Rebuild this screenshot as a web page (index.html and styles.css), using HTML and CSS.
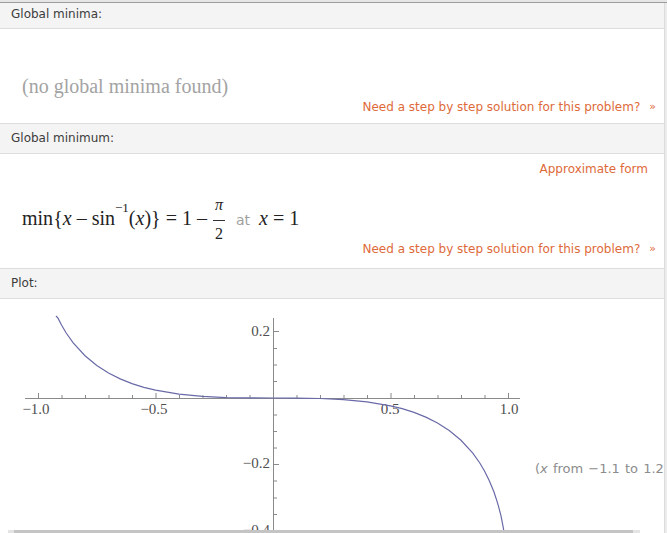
FILE: index.html
```html
<!DOCTYPE html>
<html>
<head>
<meta charset="utf-8">
<link rel="stylesheet" href="styles.css">
</head>
<body>
<div class="topbar"></div>
<div class="pods">
  <section class="pod">
    <div class="pod-head pod-head--first">Global minima:</div>
    <div class="pod-body pod-body--minima">
      <div class="noresult">(no global minima found)</div>
      <div class="step-row"><a class="step-link">Need a step by step solution for this problem?</a><span class="chev">»</span></div>
    </div>
  </section>
  <section class="pod">
    <div class="pod-head">Global minimum:</div>
    <div class="pod-body pod-body--minimum">
      <div class="approx-row"><a class="approx-link">Approximate form</a></div>
      <div class="formula"><span class="f-line">min<span class="brace">{</span><i>x</i><span class="op">–</span>sin<span class="sup">−1</span>(<i>x</i>)<span class="brace">}</span><span class="op op--wide">=</span>1<span class="op op--wide">–</span><span class="frac"><span class="num"><i>π</i></span><span class="den">2</span></span><span class="at">at</span><i>x</i><span class="op op--wide">=</span>1</span></div>
      <div class="step-row"><a class="step-link">Need a step by step solution for this problem?</a><span class="chev">»</span></div>
    </div>
  </section>
  <section class="pod">
    <div class="pod-head">Plot:</div>
    <div class="pod-body pod-body--plot">
      <svg class="plot" width="530" height="240" viewBox="0 0 530 240">
        <g class="axis" stroke="#8a8a8a" stroke-width="1" fill="none">
          <line x1="25" y1="99.5" x2="520" y2="99.5"/>
          <line x1="273.5" y1="19" x2="273.5" y2="240"/>
          <path d="M38.5 99v-5 M62 99v-3 M85.5 99v-3 M109 99v-3 M132.5 99v-3 M156 99v-5 M179.5 99v-3 M203 99v-3 M226.5 99v-3 M250 99v-3 M297 99v-3 M320.5 99v-3 M344 99v-3 M367.5 99v-3 M391 99v-5 M414.5 99v-3 M438 99v-3 M461.5 99v-3 M485 99v-3 M508.5 99v-5"/>
          <path d="M274 32.5h5 M274 49.5h3 M274 66h3 M274 82.5h3 M274 116h3 M274 132.5h3 M274 149h3 M274 165.5h5 M274 182h3 M274 199h3 M274 215.5h3 M274 232h5"/>
        </g>
        <g class="ticklabels">
          <text x="36" y="115" text-anchor="middle">−1.0</text>
          <text x="154" y="115" text-anchor="middle">−0.5</text>
          <text x="390" y="115" text-anchor="middle">0.5</text>
          <text x="509" y="115" text-anchor="middle">1.0</text>
          <text x="270" y="37" text-anchor="end">0.2</text>
          <text x="270" y="169" text-anchor="end">−0.2</text>
          <text x="270" y="236" text-anchor="end">−0.4</text>
        </g>
        <polyline class="curve" fill="none" stroke="#6a6aa8" stroke-width="1.2" points="56,17 58,19.2 61.5,26 66.2,34 73.2,43.9 85,56.7 96.8,66.4 108.5,74 120.2,79.9 132,84.6 143.8,88.3 155.5,91.2 179,95.2 202.5,97.4 226,98.6 249.5,98.9 273,99 296.5,99.1 320,99.5 343.5,100.6 367,102.8 390.5,106.8 402.2,109.7 414,113.4 425.8,118.1 437.5,124 449.2,131.6 461,141.3 472.8,154.1 479.8,164 484.5,172 489.2,181.4 493.9,192.8 496.2,199.7 498.6,207.6 501,216.9 503.3,228.6 505.6,244.8"/>
      </svg>
      <div class="plot-caption">(<i>x</i> from −1.1 to 1.2</div>
    </div>
  </section>
</div>
<div class="hscroll"></div>
</body>
</html>
```

FILE: styles.css
```css
html, body {
  margin: 0;
  padding: 0;
  overflow: hidden;
}
body {
  background: #ececec;
  font-family: "DejaVu Sans", Verdana, sans-serif;
  font-size: 12px;
  color: #444;
}
.topbar {
  height: 2px;
  background: #e6e6e6;
  border-bottom: 1px solid #9d9d9d;
}
.pods {
  width: 664px;
  border-right: 1px solid #dcdcdc;
}
.pod-head {
  height: 29px;
  line-height: 29px;
  padding-left: 11px;
  background: #f4f4f4;
  border-bottom: 1px solid #dddddd;
  color: #3c3c3c;
}
.pod-head--first {
  height: 25px;
  line-height: 22px;
}
.pod-body {
  background: #ffffff;
  border-bottom: 1px solid #dddddd;
  box-sizing: border-box;
}
.pod-body--minima {
  height: 95px;
  padding-top: 44px;
}
.noresult {
  padding-left: 22px;
  font-family: "Liberation Serif", "Times New Roman", serif;
  font-size: 20px;
  line-height: 26px;
  color: #a3a3a3;
}
.step-row {
  display: flex;
  justify-content: flex-end;
  align-items: center;
  height: 16px;
  padding-right: 8px;
}
.step-link, .approx-link {
  color: #de6a3a;
  line-height: 16px;
}
.chev {
  color: #de6a3a;
  font-size: 11px;
  margin-left: 9px;
  line-height: 16px;
}
.pod-body--minimum {
  height: 115px;
  padding-top: 7px;
}
.approx-row {
  display: flex;
  justify-content: flex-end;
  padding-right: 16px;
  height: 16px;
  margin-bottom: 17px;
}
.formula {
  height: 47px;
  padding-left: 22px;
  font-family: "Liberation Serif", "Times New Roman", serif;
  font-size: 20px;
  line-height: 26px;
  color: #222;
  white-space: nowrap;
}
.formula i {
  font-style: italic;
}
.brace {
  padding: 0;
}
.op {
  padding: 0 5px;
}
.op--wide {
  padding: 0 5px;
}
.sup {
  font-size: 13px;
  vertical-align: 13px;
  line-height: 0;
}
.frac {
  display: inline-flex;
  flex-direction: column;
  align-items: center;
  vertical-align: 15px;
  font-size: 16px;
  margin: 0 1px;
}
.num {
  line-height: 22px;
  padding: 0 2px 4px;
  border-bottom: 1px solid #333;
}
.den {
  line-height: 22px;
  padding-top: 2px;
}
.at {
  font-family: "DejaVu Sans", Verdana, sans-serif;
  font-size: 14px;
  color: #a0a0a0;
  margin: 0 9px 0 10px;
}
.pod-body--plot {
  display: flex;
  align-items: flex-start;
  height: 240px;
  border-bottom: none;
}
.plot {
  display: block;
  flex: none;
}
.ticklabels text {
  font-family: "Liberation Serif", "Times New Roman", serif;
  font-size: 15px;
  fill: #505050;
}
.plot-caption {
  margin-top: 162px;
  margin-left: 5px;
  white-space: nowrap;
  color: #8c8c8c;
  font-size: 13px;
  word-spacing: 1px;
}
.hscroll {
  position: fixed;
  left: 8px;
  bottom: 0;
  width: 619px;
  height: 3px;
  background: #c4c4c4;
  border-left: 6px solid #e4e4e4;
  border-right: 7px solid #e4e4e4;
}
```
